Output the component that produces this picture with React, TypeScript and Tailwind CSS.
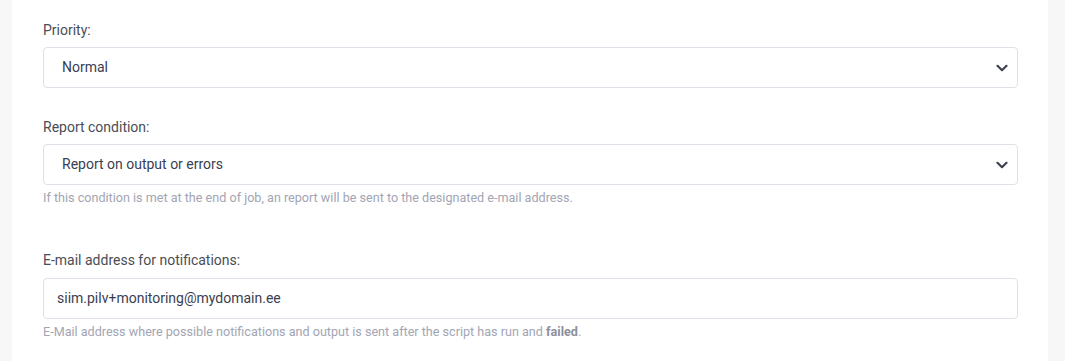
import { useState } from 'react';

function Chevron() {
  return (
    <svg className="w-[12px] h-[8px] text-[#3d4250]" viewBox="0 0 12 8" fill="none" stroke="currentColor" strokeWidth={2.2} strokeLinecap="round" strokeLinejoin="round">
      <path d="M1.5 1.8 6 6.2l4.5-4.4" />
    </svg>
  );
}

function SelectBox({ value }: { value: string }) {
  return (
    <div className="h-[41px] rounded-[4px] border border-[#e0e1e8] bg-white flex items-center justify-between pl-[18px] pr-[9px] text-[14px] text-[#3a4052]">
      <span>{value}</span>
      <Chevron />
    </div>
  );
}

export default function App() {
  const [email] = useState('siim.pilv+monitoring@mydomain.ee');

  return (
    <div className="w-[1065px] h-[361px] bg-[#f7f7f7] flex overflow-hidden" style={{ fontFamily: 'Roboto, "Liberation Sans", sans-serif' }}>
      <div className="ml-[12px] w-[1036px] bg-white pl-[31px] pr-[30px] pt-[20px]">
        {/* 优先级 */}
        <label className="block text-[14px] leading-[20px] text-[#4a4d55] mb-[7px]">Priority:</label>
        <SelectBox value="Normal" />

        {/* 报告条件 */}
        <label className="block mt-[29px] text-[14px] leading-[20px] text-[#4a4d55] mb-[7px]">Report condition:</label>
        <SelectBox value="Report on output or errors" />
        <p className="mt-[4px] text-[12.6px] leading-[18px] text-[#a2a5b3]">
          If this condition is met at the end of job, an report will be sent to the designated e-mail address.
        </p>

        {/* 邮件地址 */}
        <label className="block mt-[43px] text-[14px] leading-[20px] text-[#4a4d55] mb-[8px]">E-mail address for notifications:</label>
        <div className="h-[41px] rounded-[4px] border border-[#e0e1e8] bg-white flex items-center pl-[13px] text-[14px] text-[#3a4052]">
          {email}
        </div>
        <p className="mt-[4px] text-[12.6px] leading-[18px] text-[#a2a5b3]">
          E-Mail address where possible notifications and output is sent after the script has run and{' '}
          <span className="font-bold text-[#8d909c]">failed</span>.
        </p>
      </div>
    </div>
  );
}
